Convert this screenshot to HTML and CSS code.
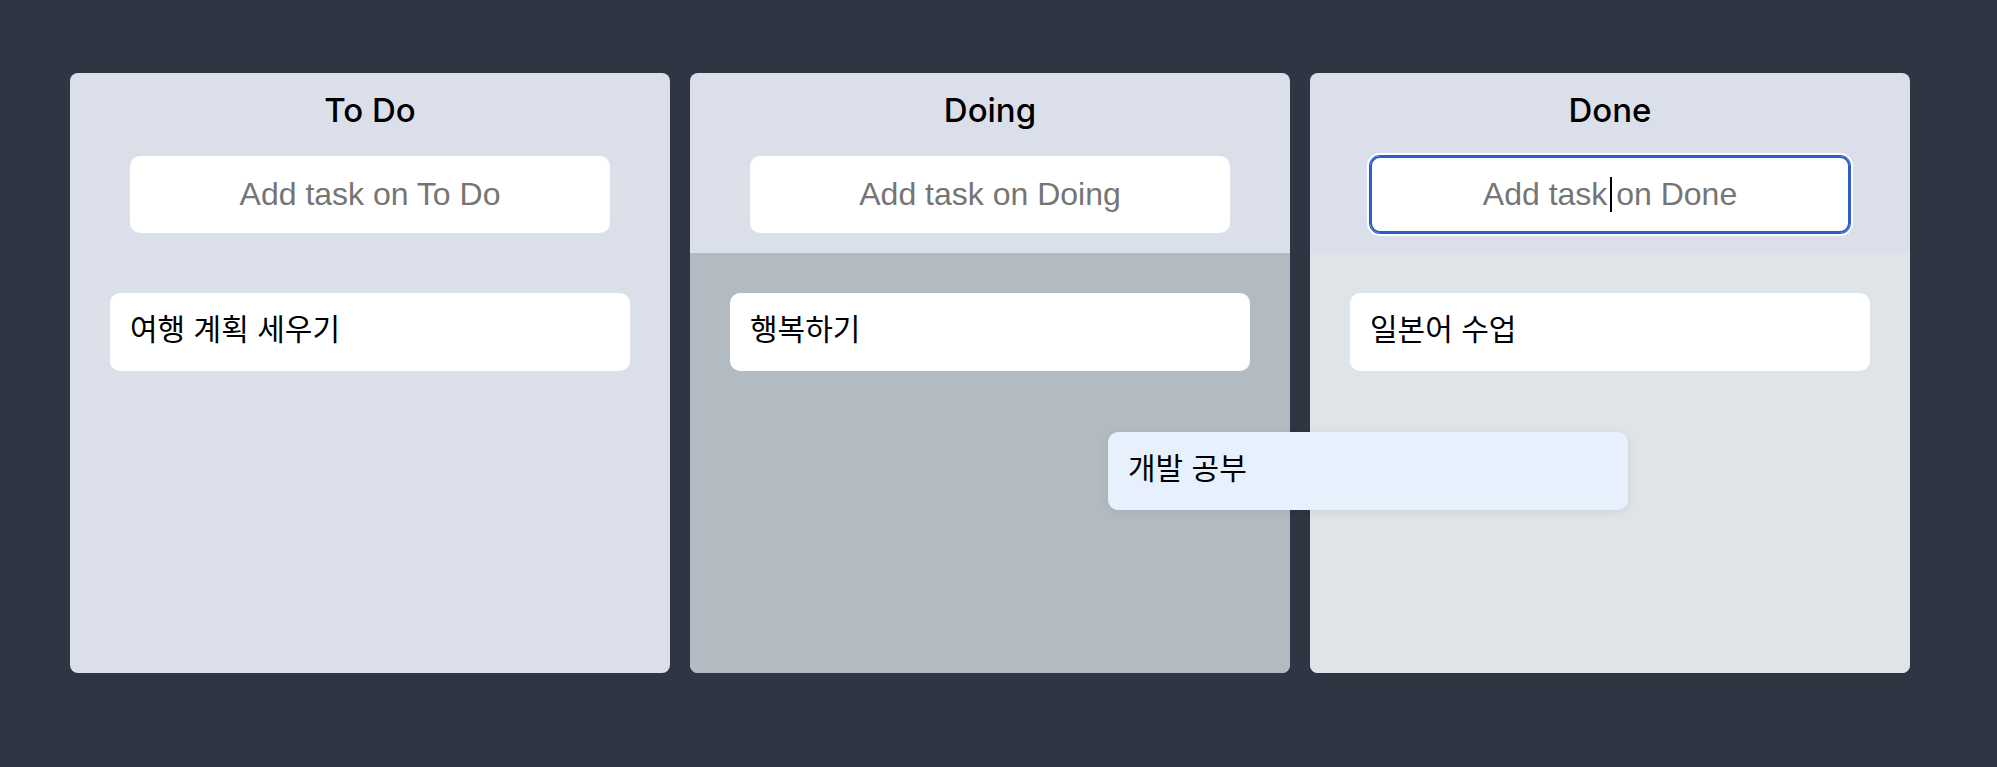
FILE: index.html
```html
<!DOCTYPE html>
<html lang="ko">
<head>
<meta charset="utf-8">
<title>Kanban</title>
<link rel="stylesheet" href="styles.css">
</head>
<body>
<div class="page">
  <div class="boards">
    <section class="board">
      <header class="board-head">
        <h2 class="title">To Do</h2>
        <form class="add">
          <input class="add-input" type="text" placeholder="Add task on To Do">
        </form>
      </header>
      <div class="area">
        <div class="card">여행 계획 세우기</div>
      </div>
    </section>
    <section class="board">
      <header class="board-head">
        <h2 class="title">Doing</h2>
        <form class="add">
          <input class="add-input" type="text" placeholder="Add task on Doing">
        </form>
      </header>
      <div class="area area-over">
        <div class="card">행복하기</div>
      </div>
    </section>
    <section class="board">
      <header class="board-head">
        <h2 class="title">Done</h2>
        <form class="add">
          <input class="add-input is-focused" type="text" placeholder="Add task on Done">
          <span class="caret"></span>
        </form>
      </header>
      <div class="area area-from">
        <div class="card">일본어 수업</div>
      </div>
    </section>
  </div>
  <div class="card card-dragging">개발 공부</div>
</div>
</body>
</html>
```

FILE: styles.css
```css
html, body {
  margin: 0;
  padding: 0;
}

body {
  background: #2f3542;
  height: 767px;
  overflow: hidden;
}

.page {
  position: relative;
  height: 767px;
  padding: 73px 0 0 70px;
  box-sizing: border-box;
}

.boards {
  display: flex;
  gap: 20px;
}

.board {
  width: 600px;
  height: 600px;
  background: #dadfe9;
  border-radius: 8px;
  display: flex;
  flex-direction: column;
  overflow: hidden;
}

.board-head {
  display: flex;
  flex-direction: column;
  align-items: center;
  padding: 19px 0 20px;
}

.title {
  margin: 0;
  font-family: Inter, "Liberation Sans", sans-serif;
  font-weight: 500;
  font-size: 33px;
  line-height: 37px;
  color: #000;
}

.add {
  position: relative;
  margin: 27px 0 0;
}

.add-input {
  display: block;
  width: 480px;
  height: 77px;
  box-sizing: border-box;
  border: none;
  border-radius: 10px;
  padding: 0;
  background: #fff;
  font-family: "Liberation Sans", Arial, sans-serif;
  font-size: 32px;
  text-align: center;
  outline: none;
}

.add-input::placeholder {
  color: #757575;
}

.add-input.is-focused {
  box-shadow: inset 0 0 0 2px #2b5ec6, 0 0 0 1px #2b5ec6, 0 0 0 3px #ffffff;
}

.caret {
  position: absolute;
  left: 240px;
  top: 21px;
  width: 2px;
  height: 35px;
  background: #000;
}

.area {
  flex: 1;
  padding: 40px;
}

.area-over {
  background: #b3bbc2;
}

.area-from {
  background: #dfe4e9;
}

.card {
  background: #fff;
  border-radius: 10px;
  padding: 16px 20px 24px;
  font-family: "Noto Sans CJK KR", "Noto Sans", sans-serif;
  font-size: 30px;
  line-height: 37.5px;
  color: #000;
}

.card-dragging {
  position: absolute;
  left: 1108px;
  top: 432px;
  width: 520px;
  box-sizing: border-box;
  background: #e7f1fd;
  box-shadow: 0 2px 10px rgba(0, 0, 0, 0.08);
}
```
